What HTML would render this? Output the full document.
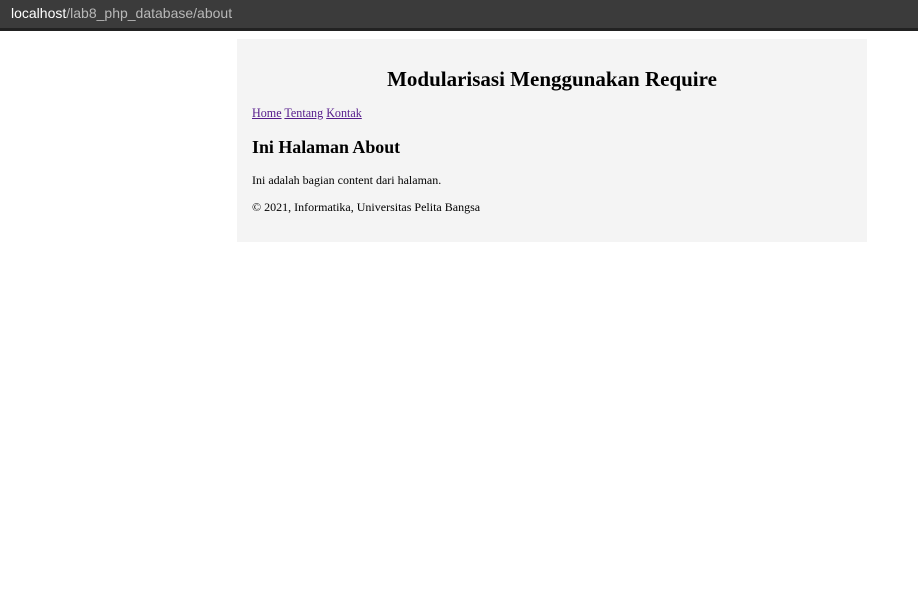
<!DOCTYPE html>
<html><head><style>
body{margin:0;background:#fff;font-family:"Liberation Serif",serif;width:918px;height:611px;overflow:hidden}
.bar{height:28px;background:#3b3b3b;border-bottom:3px solid #222;position:relative}
.bar span{position:absolute;left:11px;top:5px;font:14px "Liberation Sans",sans-serif;color:#b8b8b8}
.bar b{color:#fff;font-weight:normal}
.box{position:absolute;left:237px;top:39px;width:630px;height:203px;background:#f4f4f4}
h1{position:absolute;left:0;width:630px;top:28px;margin:0;text-align:center;font-size:21px;font-weight:bold}
.nav{position:absolute;left:15px;top:67px;font-size:12.1px}
.nav a{color:#551a8b;text-decoration:underline}
h2{position:absolute;left:15px;top:98px;margin:0;font-size:17.9px}
p{position:absolute;left:15px;margin:0;font-size:12px}
</style></head><body>
<div class="bar"><span><b>localhost</b>/lab8_php_database/about</span></div>
<div class="box">
<h1>Modularisasi Menggunakan Require</h1>
<div class="nav"><a>Home</a> <a>Tentang</a> <a>Kontak</a></div>
<h2>Ini Halaman About</h2>
<p style="top:134px">Ini adalah bagian content dari halaman.</p>
<p style="top:161px">© 2021, Informatika, Universitas Pelita Bangsa</p>
</div>
</body></html>
